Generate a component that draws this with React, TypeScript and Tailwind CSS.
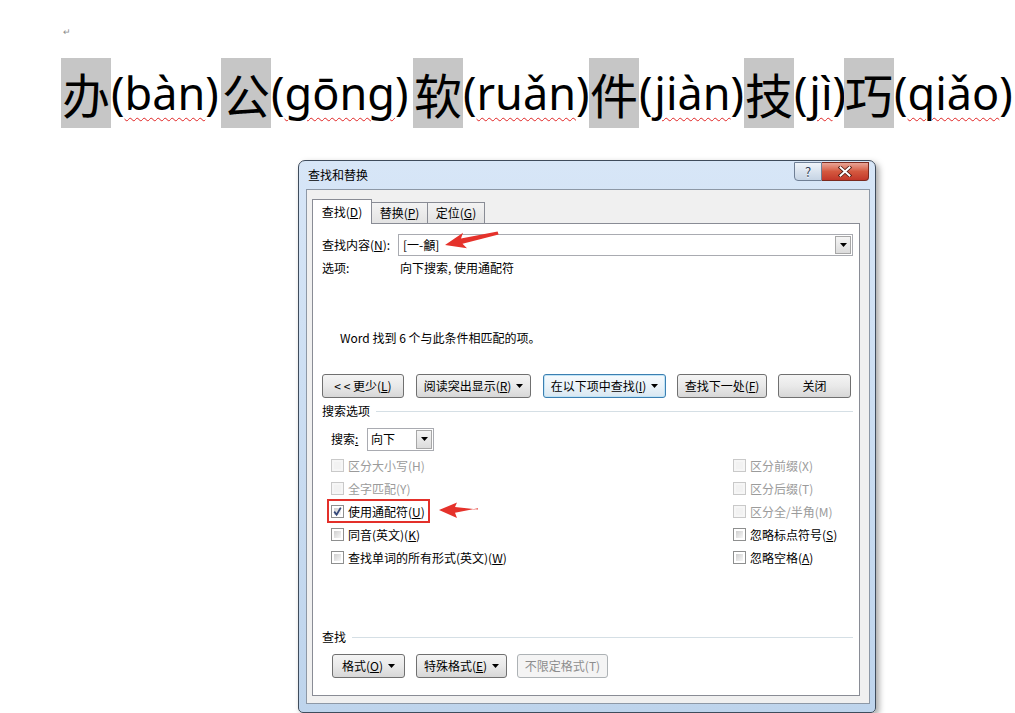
import React from 'react';

const words: [string, string, string][] = [
  ['办', 'bàn', 'w-[110px]'],
  ['公', 'gōng', 'w-[142px]'],
  ['软', 'ruǎn', 'w-[126px]'],
  ['件', 'jiàn', 'w-[105px]'],
  ['技', 'jì', 'w-[50px]'],
  ['巧', 'qiǎo', 'w-[121px]'],
];

function Caret() {
  return (
    <svg width="7" height="4" viewBox="0 0 7 4" className="shrink-0">
      <path d="M0 0h7L3.5 4z" fill="#000" />
    </svg>
  );
}

function Btn({
  w,
  children,
  caret,
  focused,
  disabled,
}: {
  w: string;
  children: React.ReactNode;
  caret?: boolean;
  focused?: boolean;
  disabled?: boolean;
}) {
  let look = 'border-[#707070] bg-linear-to-b from-[#f4f4f4] via-[#e9e9e9] to-[#d7d7d7] text-black';
  if (focused) look = 'border-[#3c7fb1] bg-linear-to-b from-[#f6fafd] via-[#eaf3f9] to-[#d9e7f1] text-black shadow-[inset_0_0_0_1px_#bfe3f6]';
  if (disabled) look = 'border-[#adb2b5] bg-[#f4f4f4] text-[#8d8d8d]';
  return (
    <div className={`${w} h-[24px] shrink-0 rounded-[3px] border flex items-center justify-center gap-[5px] text-[12px] leading-none ${look}`}>
      <span>{children}</span>
      {caret && <Caret />}
    </div>
  );
}

function Check({ label, checked, disabled }: { label: React.ReactNode; checked?: boolean; disabled?: boolean }) {
  return (
    <div className="h-[23px] flex items-center">
      <span
        className={`w-[13px] h-[13px] shrink-0 border p-[2px] flex ${
          disabled ? 'border-[#c9c9c9] bg-[#f6f6f6]' : 'border-[#8e8f8f] bg-white'
        }`}
      >
        <span
          className={`relative flex-1 ${disabled ? 'bg-[#f2f2f2]' : 'bg-linear-to-br from-[#cfcfcf] to-[#f7f7f7]'}`}
        >
          {checked && (
            <svg width="11" height="11" viewBox="0 0 11 11" className="absolute left-[-2px] top-[-2px]">
              <path d="M2.2 5.6 L4.6 8.6 L8.8 1.6" fill="none" stroke="#34487a" strokeWidth="1.8" />
            </svg>
          )}
        </span>
      </span>
      <span className={`ml-[4px] text-[12px] leading-none ${disabled ? 'text-[#9b9b9b]' : 'text-black'}`}>{label}</span>
    </div>
  );
}

function DropBtn() {
  return (
    <div className="w-[16px] my-[1px] mr-[1px] border border-[#a7a7a7] bg-linear-to-b from-[#f5f5f5] to-[#dcdcdc] flex items-center justify-center">
      <Caret />
    </div>
  );
}

function SectionHead({ children }: { children: React.ReactNode }) {
  return (
    <div className="h-[18px] flex items-center">
      <span className="text-[12px] leading-none">{children}</span>
      <span className="ml-[6px] flex-1 h-px bg-[#d5dfe5]" />
    </div>
  );
}

export default function App() {
  return (
    <div className="relative w-[1015px] h-[713px] overflow-hidden bg-white font-['Noto_Sans_CJK_SC',sans-serif] text-black">
      <div className="h-[58px] pl-[63px] pt-[27px] text-[9px] leading-none text-[#8c8c8c]">↵</div>

      {/* document line */}
      <div className="flex h-[70px] pl-[61px]">
        {words.map(([c, py, w]) => (
          <React.Fragment key={c}>
            <span className="w-[50px] shrink-0 bg-[#c6c6c6] flex items-center justify-center text-[48px] leading-none">
              {c}
            </span>
            <span className={`${w} shrink-0 whitespace-nowrap text-[45px] leading-[70px] font-['Noto_Sans',sans-serif]`}>
              (
              <span className="underline decoration-wavy decoration-[#e02424] decoration-1 underline-offset-[7px]">
                {py}
              </span>
              )
            </span>
          </React.Fragment>
        ))}
      </div>

      {/* dialog */}
      <div className="ml-[298px] mt-[32px] w-[578px] h-[553px] rounded-t-[7px] rounded-b-[5px] border border-[#3f4c5c] bg-linear-to-b from-[#d7e6f7] to-[#bed4ec] shadow-[3px_3px_6px_rgba(0,0,0,0.35)] flex flex-col">
        <div className="h-[28px] shrink-0 flex items-start justify-between pl-[9px]">
          <span className="mt-[6px] text-[12px] leading-[16px]">查找和替换</span>
          <div className="flex mt-[1px] mr-[6px]">
            <div className="w-[28px] h-[19px] rounded-bl-[4px] border border-[#6f7f95] bg-linear-to-b from-[#eef3f9] to-[#c6d4e4] flex items-center justify-center text-[13px] leading-none text-[#2f3e55] [text-shadow:0_1px_0_#fff]">
              ?
            </div>
            <div className="w-[47px] h-[19px] rounded-br-[4px] border border-[#7b2a1f] border-l-0 bg-linear-to-b from-[#e8a496] via-[#d4583f] to-[#c2372a] flex items-center justify-center">
              <svg width="14" height="11" viewBox="0 0 14 11">
                <path d="M2.5 1.5 L11.5 9.5 M11.5 1.5 L2.5 9.5" stroke="#4a1710" strokeWidth="3.6" strokeLinecap="square" />
                <path d="M2.5 1.5 L11.5 9.5 M11.5 1.5 L2.5 9.5" stroke="#ffffff" strokeWidth="2" strokeLinecap="square" />
              </svg>
            </div>
          </div>
        </div>

        <div className="ml-[7px] w-[564px] h-[515px] border border-[#8d98a6] bg-[#f0f0f0] pt-[9px]">
          {/* tabs */}
          <div className="h-[24px] pl-[5px] flex items-end text-[12px] leading-none">
            <div className="relative z-10 -mb-px w-[60px] h-[25px] border-x border-t border-[#898c95] bg-white flex items-center justify-center">
              查找(<u>D</u>)
            </div>
            <div className="w-[56px] h-[21px] border-t border-r border-[#898c95] bg-linear-to-b from-[#f3f3f3] to-[#e3e3e3] flex items-center justify-center">
              替换(<u>P</u>)
            </div>
            <div className="w-[57px] h-[21px] border-t border-r border-[#898c95] bg-linear-to-b from-[#f3f3f3] to-[#e3e3e3] flex items-center justify-center">
              定位(<u>G</u>)
            </div>
          </div>

          {/* panel */}
          <div className="ml-[5px] w-[548px] h-[473px] border border-[#898c95] bg-white pt-[10px] pl-[9px] pr-[6px] text-[12px] leading-none">
            <div className="h-[22px] flex items-center">
              <span className="w-[76px] shrink-0">
                查找内容(<u>N</u>):
              </span>
              <div className="flex-1 h-[22px] border border-[#a9abb1] flex">
                <span className="flex-1 pl-[4px] flex items-center">[一-龥]</span>
                <DropBtn />
              </div>
            </div>
            <div className="mt-[3px] h-[18px] flex items-center">
              <span className="w-[78px] shrink-0">选项:</span>
              <span>向下搜索, 使用通配符</span>
            </div>
            <div className="mt-[52px] h-[18px] pl-[18px] flex items-center">Word 找到 6 个与此条件相匹配的项。</div>

            <div className="mt-[27px] flex">
              <Btn w="w-[82px]">
                &lt; &lt; 更少(<u>L</u>)
              </Btn>
              <div className="ml-[12px]">
                <Btn w="w-[115px]" caret>
                  阅读突出显示(<u>R</u>)
                </Btn>
              </div>
              <div className="ml-[12px]">
                <Btn w="w-[123px]" caret focused>
                  在以下项中查找(<u>I</u>)
                </Btn>
              </div>
              <div className="ml-[11px]">
                <Btn w="w-[90px]">
                  查找下一处(<u>F</u>)
                </Btn>
              </div>
              <div className="ml-[11px]">
                <Btn w="w-[73px]">关闭</Btn>
              </div>
            </div>

            <div className="mt-[4px]">
              <SectionHead>搜索选项</SectionHead>
            </div>

            <div className="mt-[8px] pl-[9px] h-[22px] flex items-center">
              <span className="w-[36px] shrink-0">
                搜索<u>:</u>
              </span>
              <div className="w-[67px] h-[23px] border border-[#a9abb1] flex">
                <span className="flex-1 pl-[3px] flex items-center">向下</span>
                <DropBtn />
              </div>
            </div>

            <div className="mt-[4px] pl-[9px] flex">
              <div className="w-[402px] shrink-0">
                <Check disabled label="区分大小写(H)" />
                <Check disabled label="全字匹配(Y)" />
                <div className="relative">
                  <Check
                    checked
                    label={
                      <>
                        使用通配符(<u>U</u>)
                      </>
                    }
                  />
                  <span className="absolute left-[-4px] top-[-1px] w-[103px] h-[24px] border-2 border-[#e3302a]" />
                </div>
                <Check
                  label={
                    <>
                      同音(英文)(<u>K</u>)
                    </>
                  }
                />
                <Check
                  label={
                    <>
                      查找单词的所有形式(英文)(<u>W</u>)
                    </>
                  }
                />
              </div>
              <div>
                <Check disabled label="区分前缀(X)" />
                <Check disabled label="区分后缀(T)" />
                <Check disabled label="区分全/半角(M)" />
                <Check
                  label={
                    <>
                      忽略标点符号(<u>S</u>)
                    </>
                  }
                />
                <Check
                  label={
                    <>
                      忽略空格(<u>A</u>)
                    </>
                  }
                />
              </div>
            </div>

            <div className="mt-[59px]">
              <SectionHead>查找</SectionHead>
            </div>

            <div className="mt-[8px] pl-[10px] flex">
              <Btn w="w-[73px]" caret>
                格式(<u>O</u>)
              </Btn>
              <div className="ml-[11px]">
                <Btn w="w-[91px]" caret>
                  特殊格式(<u>E</u>)
                </Btn>
              </div>
              <div className="ml-[10px]">
                <Btn w="w-[91px]" disabled>
                  不限定格式(T)
                </Btn>
              </div>
            </div>
          </div>
        </div>
      </div>

      {/* annotation arrows */}
      <svg className="absolute inset-0 pointer-events-none" width="1015" height="713" viewBox="0 0 1015 713">
        <polygon
          points="445,245 467,248.2 462.5,243.8 498.6,234.4 497.6,231.4 461,238.6 463,232.8"
          fill="#e5322b"
        />
        <polygon points="439,510 457,502.5 455,507 478,509.6 478,508.2 455,512.8 457,518" fill="#e5322b" />
      </svg>
    </div>
  );
}
